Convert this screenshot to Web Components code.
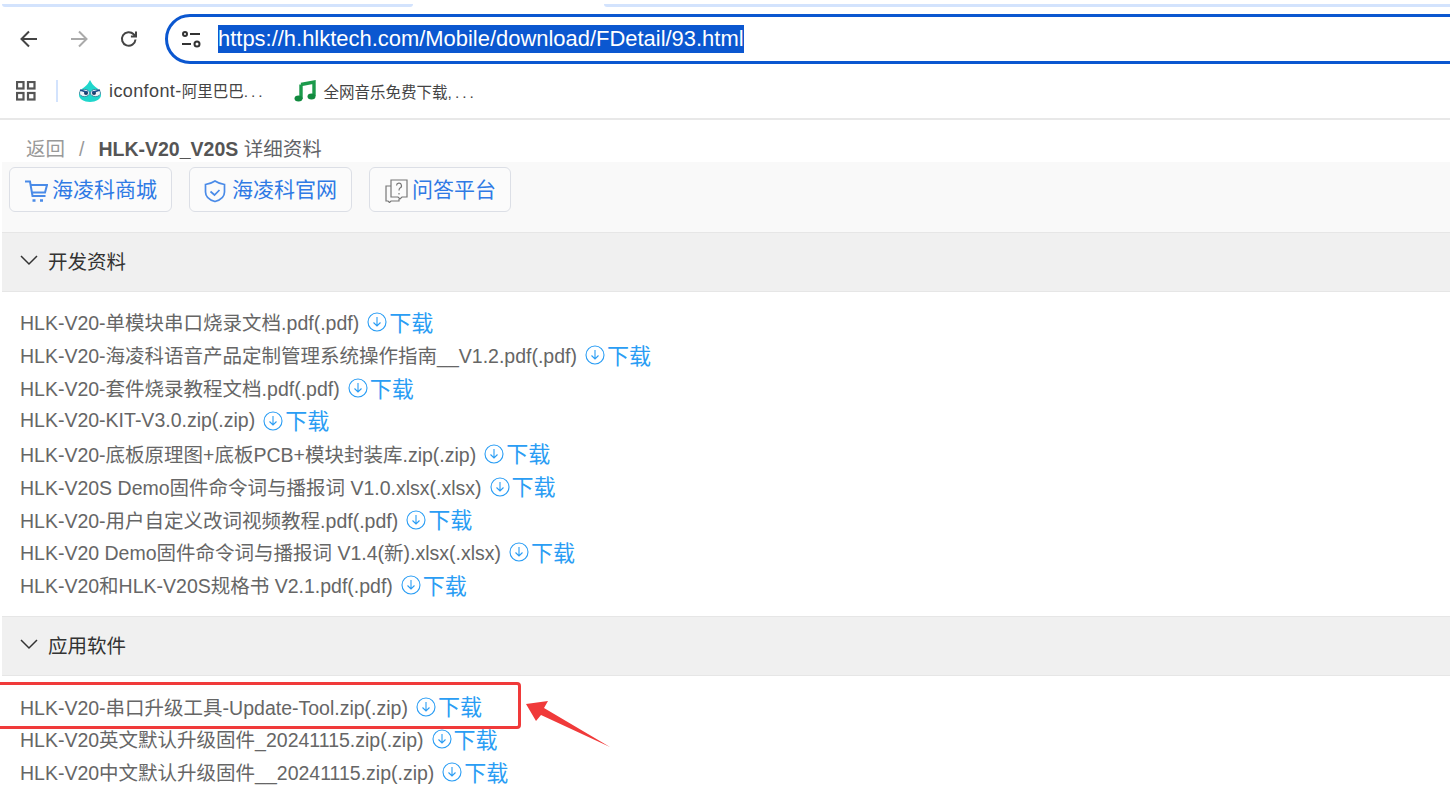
<!DOCTYPE html>
<html lang="zh">
<head>
<meta charset="utf-8">
<title>HLK-V20_V20S</title>
<style>
  html, body { margin: 0; height: 804px; overflow: hidden; background: #fff; }
  body { position: relative; font-family: "Liberation Sans", "Noto Sans CJK SC", sans-serif; color: #666; }
</style>
</head>
<body>
<browser-toolbar url="https://h.hlktech.com/Mobile/download/FDetail/93.html"></browser-toolbar>
<bookmark-bar></bookmark-bar>
<crumb-bar title-text="HLK-V20_V20S" suffix="详细资料"></crumb-bar>
<link-bar>
  <link-button icon="cart">海凌科商城</link-button>
  <link-button icon="shield">海凌科官网</link-button>
  <link-button icon="ask">问答平台</link-button>
</link-bar>
<doc-section heading="开发资料" pad-bottom="15">
  <doc-row>HLK-V20-单模块串口烧录文档.pdf(.pdf)</doc-row>
  <doc-row>HLK-V20-海凌科语音产品定制管理系统操作指南__V1.2.pdf(.pdf)</doc-row>
  <doc-row>HLK-V20-套件烧录教程文档.pdf(.pdf)</doc-row>
  <doc-row>HLK-V20-KIT-V3.0.zip(.zip)</doc-row>
  <doc-row>HLK-V20-底板原理图+底板PCB+模块封装库.zip(.zip)</doc-row>
  <doc-row>HLK-V20S Demo固件命令词与播报词 V1.0.xlsx(.xlsx)</doc-row>
  <doc-row>HLK-V20-用户自定义改词视频教程.pdf(.pdf)</doc-row>
  <doc-row>HLK-V20 Demo固件命令词与播报词 V1.4(新).xlsx(.xlsx)</doc-row>
  <doc-row>HLK-V20和HLK-V20S规格书 V2.1.pdf(.pdf)</doc-row>
</doc-section>
<doc-section heading="应用软件" pad-bottom="15.4">
  <doc-row>HLK-V20-串口升级工具-Update-Tool.zip(.zip)</doc-row>
  <doc-row>HLK-V20英文默认升级固件_20241115.zip(.zip)</doc-row>
  <doc-row>HLK-V20中文默认升级固件__20241115.zip(.zip)</doc-row>
</doc-section>
<red-callout></red-callout>

<script>
class BrowserToolbar extends HTMLElement {
  constructor() {
    super();
    this.shadowDOM = this.attachShadow({mode: "open"});
  }
  connectedCallback() {
    this.shadowDOM.innerHTML = `
      <style>
        :host { display: block; height: 70px; box-sizing: border-box; padding-top: 4px; overflow: hidden; }
        .tabs { display: flex; justify-content: space-between; height: 3px; padding-left: 2px; }
        .tabs div { background: #d3e3fd; }
        .tabs .left { width: 411px; border-radius: 0 0 3px 3px; }
        .tabs .right { width: 846px; border-radius: 0 0 0 3px; }
        .row { display: flex; align-items: center; height: 50px; margin-top: 7px; padding-left: 18px; }
        .nav { display: flex; gap: 28px; width: 147px; flex: none; }
        .nav svg { width: 22px; height: 22px; fill: none; stroke-width: 2; flex: none; }
        .omni { flex: none; width: 1400px; height: 50px; box-sizing: border-box; border: 3px solid #0b57d0; border-radius: 25px; display: flex; align-items: center; padding-left: 12px; background: #fff; }
        .omni svg { width: 22px; height: 22px; flex: none; margin-right: 16px; }
        .url { font: 21.950px/28px "Liberation Sans", "Noto Sans CJK SC", sans-serif; background: #0b57d0; color: #fff; white-space: nowrap; }
      </style>
      <div class="tabs"><div class="left"></div><div class="right"></div></div>
      <div class="row">
        <div class="nav">
          <svg viewBox="0 0 22 22" stroke="#444"><path d="M19 11H4M11 3.500 3.500 11l7.500 7.500"/></svg>
          <svg viewBox="0 0 22 22" stroke="#aaa"><path d="M3 11h15M11 3.500 18.500 11 11 18.500"/></svg>
          <svg viewBox="0 0 22 22" stroke="#444"><path d="M17.500 11.500a6.800 6.800 0 1 1-1.800-5.200L18 8.600M18 3.500v5.100h-5.100"/></svg>
        </div>
        <div class="omni">
          <svg viewBox="0 0 22 22" fill="none" stroke="#333" stroke-width="2"><circle cx="5" cy="6" r="2"/><path d="M10 6h10M2 16h9"/><circle cx="17" cy="16" r="2.500"/></svg>
          <span class="url">${this.getAttribute("url")}</span>
        </div>
      </div>`;
  }
}
customElements.define("browser-toolbar", BrowserToolbar);

class BookmarkBar extends HTMLElement {
  constructor() {
    super();
    this.shadowDOM = this.attachShadow({mode: "open"});
  }
  connectedCallback() {
    this.shadowDOM.innerHTML = `
      <style>
        :host { display: flex; align-items: center; height: 50px; box-sizing: border-box; padding: 0 0 7px 16px; border-bottom: 2px solid #e8e8e8; font-size: 15.500px; color: #444; }
        .apps { width: 20px; height: 20px; flex: none; }
        .sep { width: 2px; height: 22px; background: #d3e3fd; margin: 0 20px 0 20px; flex: none; }
        .mark { display: flex; align-items: center; white-space: nowrap; }
        .mark svg { width: 24px; height: 24px; flex: none; margin-right: 7px; }
        .mark + .mark { margin-left: 27px; }
        .lat { font-size: 18px; letter-spacing: .4px; }
        .dots { letter-spacing: 3px; }
      </style>
      <svg class="apps" viewBox="0 0 20 20" fill="none" stroke="#555" stroke-width="2.200"><rect x="1" y="1" width="6.500" height="6.500"/><rect x="12" y="1" width="6.500" height="6.500"/><rect x="1" y="12" width="6.500" height="6.500"/><rect x="12" y="12" width="6.500" height="6.500"/></svg>
      <div class="sep"></div>
      <div class="mark">
        <svg viewBox="0 0 24 24"><path d="M12 1c1.500 3 3 5 5.500 7 3.500 2 5.500 5 5.500 8 0 4-5 7-11 7S1 20 1 16c0-3 2-6 5.500-8C9 6 10.500 4 12 1z" fill="#1fd6cc"/><ellipse cx="6.500" cy="14" rx="5" ry="3.600" fill="#eef3f8" stroke="#2a6a8a" stroke-width=".7"/><ellipse cx="17.500" cy="14" rx="5" ry="3.600" fill="#eef3f8" stroke="#2a6a8a" stroke-width=".7"/><circle cx="8" cy="14" r="2" fill="#1d3a66"/><circle cx="16" cy="14" r="2" fill="#1d3a66"/><path d="M2 11l8 2.500M22 11l-8 2.500" stroke="#1d4f8c" stroke-width="1.800"/></svg>
        <span><span class="lat">iconfont-</span>阿里巴巴<span class="dots">...</span></span>
      </div>
      <div class="mark">
        <svg viewBox="0 0 24 24"><path d="M8 5.500 21 3v14M8 5.500V20" fill="none" stroke="#1b9a4b" stroke-width="3.400"/><ellipse cx="5.500" cy="19.500" rx="4" ry="3" fill="#128a3f"/><ellipse cx="18.500" cy="17.500" rx="4" ry="3" fill="#128a3f"/></svg>
        <span>全网音乐免费下载<span class="dots">,...</span></span>
      </div>`;
  }
}
customElements.define("bookmark-bar", BookmarkBar);

class CrumbBar extends HTMLElement {
  constructor() {
    super();
    this.shadowDOM = this.attachShadow({mode: "open"});
  }
  connectedCallback() {
    this.shadowDOM.innerHTML = `
      <style>
        :host { display: flex; align-items: flex-end; height: 42px; box-sizing: border-box; padding: 0 0 0 26px; font-size: 19.500px; line-height: 26px; color: #606266; white-space: nowrap; }
        .back { color: #999; }
        .slash { color: #999; margin: 0 14px; }
        b { color: #555; }
      </style>
      <span class="back">返回</span><span class="slash">/</span><b>${this.getAttribute("title-text")}</b><span>&nbsp;${this.getAttribute("suffix")}</span>`;
  }
}
customElements.define("crumb-bar", CrumbBar);

class LinkBar extends HTMLElement {
  constructor() {
    super();
    this.attachShadow({mode: "open"}).innerHTML = `
      <style>
        :host { display: flex; gap: 17px; height: 70px; box-sizing: border-box; margin-left: 2px; padding: 5px 0 0 7px; background: #f9f9f9; }
      </style>
      <slot></slot>`;
  }
}
customElements.define("link-bar", LinkBar);

const LINK_ICONS = {
  cart: `<svg viewBox="0 0 24 24" fill="none" stroke="#4a8be8" stroke-width="2"><path d="M1 2.500h5l2.500 14.500h13M6.500 6H23l-2 7.500H8"/><path d="M8.500 21.500h3M16 21.500h3" stroke-width="2.600"/></svg>`,
  shield: `<svg viewBox="0 0 24 24" fill="none" stroke="#4a8be8" stroke-width="1.700"><path d="M11 2c3 2 6 3 9.500 3.500V13c0 5-4 8-9.500 9.500C5.500 21 1.500 18 1.500 13V5.500C5 5 8 4 11 2z"/><path d="M6.500 12.500l4 3.500 5-5"/></svg>`,
  ask: `<svg viewBox="0 0 24 24" fill="none" stroke="#777" stroke-width="1.200"><path d="M7 7H2v15h2l1.500 1.500L7 22h8v-2"/><path d="M7 1h16v17h-5l-2 2-2-2H7z"/><path d="M12.500 6.500a2.500 2.500 0 1 1 3.500 2.500c-.8.500-1 1-1 2.500M15 14v1.500"/></svg>`
};

class LinkButton extends HTMLElement {
  constructor() {
    super();
    this.shadowDOM = this.attachShadow({mode: "open"});
  }
  connectedCallback() {
    this.shadowDOM.innerHTML = `
      <style>
        :host { display: flex; align-items: center; height: 45px; box-sizing: border-box; padding: 0 14px 4px; border: 1.500px solid #dcdfe6; border-radius: 6px; background: #fbfbfb; color: #2f7ae5; font-size: 21px; white-space: nowrap; }
        svg { width: 24px; height: 24px; flex: none; margin-right: 4px; margin-top: 6px; }
      </style>
      ${LINK_ICONS[this.getAttribute("icon")]}<slot></slot>`;
  }
}
customElements.define("link-button", LinkButton);

class DocSection extends HTMLElement {
  constructor() {
    super();
    this.shadowDOM = this.attachShadow({mode: "open"});
  }
  connectedCallback() {
    this.shadowDOM.innerHTML = `
      <style>
        :host { display: block; margin-left: 2px; }
        :host(:last-of-type) { border-bottom: 1px solid #eee; }
        .head { display: flex; align-items: center; height: 60px; box-sizing: border-box; padding: 0 0 4px 18px; background: #f0f0f0; border-top: 1px solid #e6e6e6; border-bottom: 1px solid #e6e6e6; color: #333; font-size: 19.500px; }
        svg { width: 18px; height: 18px; flex: none; margin-right: 10px; }
        .body { padding: 13.400px 0 ${this.getAttribute("pad-bottom")}px 18px; }
      </style>
      <div class="head">
        <svg viewBox="0 0 18 18" fill="none" stroke="#333" stroke-width="1.500"><path d="M1 5l8 8 8-8"/></svg>
        <span>${this.getAttribute("heading")}</span>
      </div>
      <div class="body"><slot></slot></div>`;
  }
}
customElements.define("doc-section", DocSection);

class DocRow extends HTMLElement {
  constructor() {
    super();
    this.shadowDOM = this.attachShadow({mode: "open"});
  }
  connectedCallback() {
    this.shadowDOM.innerHTML = `
      <style>
        :host { display: flex; align-items: center; height: 32.875px; font-size: 19.500px; color: #666; white-space: nowrap; }
        .dl { display: inline-flex; align-items: center; color: #2a9df4; font-size: 22px; margin: -2px 0 0 8px; }
        svg { width: 20px; height: 20px; flex: none; margin: 3px 2px 0 0; }
      </style>
      <slot></slot>
      <span class="dl">
        <svg viewBox="0 0 20 20" fill="none" stroke="#2a9df4" stroke-width="1.100"><circle cx="10" cy="10" r="9"/><path d="M10 5v9M6.500 10.500 10 14l3.500-3.500"/></svg>下载
      </span>`;
  }
}
customElements.define("doc-row", DocRow);

class RedCallout extends HTMLElement {
  constructor() {
    super();
    this.attachShadow({mode: "open"}).innerHTML = `
      <style>
        :host { display: block; position: absolute; left: 0; top: 680px; width: 620px; height: 70px; pointer-events: none; }
        .box { position: absolute; left: -4px; top: 2px; width: 525px; height: 47px; box-sizing: border-box; border: 3px solid #f03a3a; border-radius: 4px; }
        svg { position: absolute; left: 520px; top: 15px; width: 100px; height: 60px; }
      </style>
      <div class="box"></div>
      <svg viewBox="0 0 100 60"><path d="M6 9 28 6 24 13 90 52 21 20 16 26z" fill="#f03a3a"/></svg>`;
  }
}
customElements.define("red-callout", RedCallout);
</script>
</body>
</html>
